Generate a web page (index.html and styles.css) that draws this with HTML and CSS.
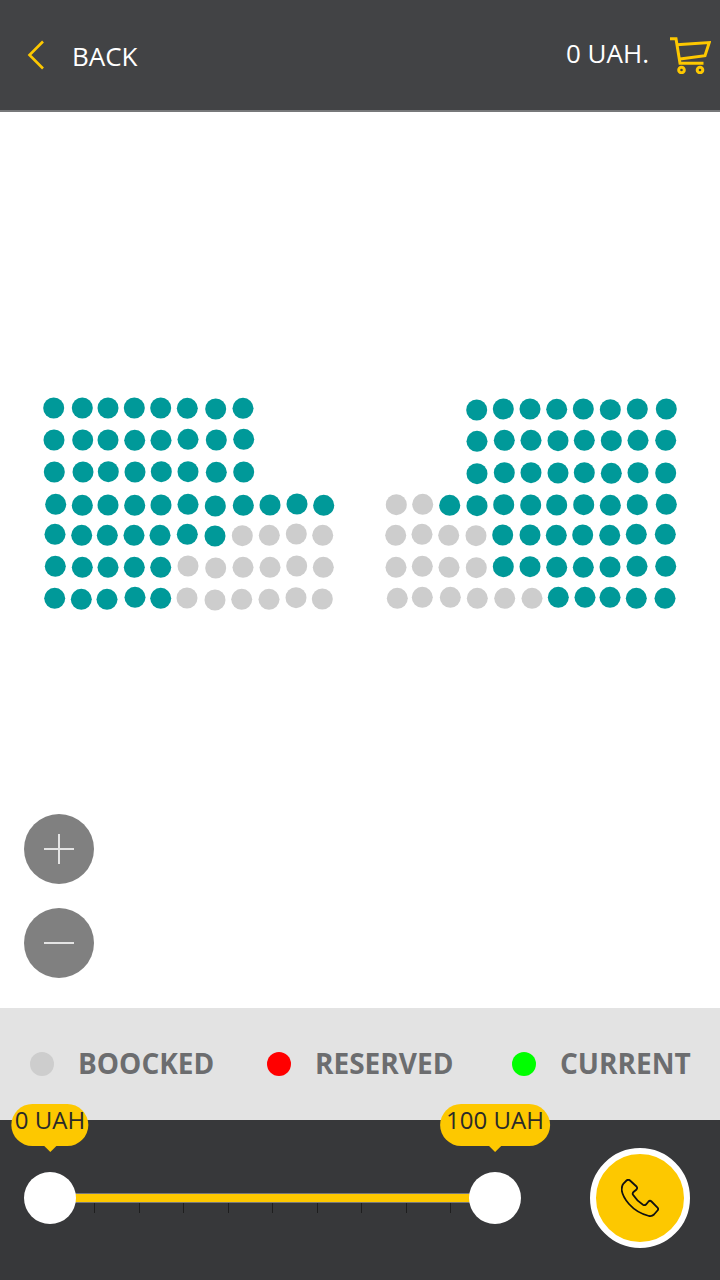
FILE: index.html
```html
<!DOCTYPE html>
<html lang="en">
<head>
    <meta charset="UTF-8">
    <meta name="viewport" content="width=device-width, initial-scale=1.0">
    <title>Hall map</title>
    <link rel="stylesheet" href="styles.css">
</head>
<body>
    <div class="screen">
        <header class="topbar">
            <a class="back-link" href="#">
                <svg class="back-icon" width="18" height="30" viewBox="0 0 18 30"><path d="M16 1.5 L2.5 15 L16 28.5"/></svg>
                <span>BACK</span>
            </a>
            <div class="cart">
                <span class="cart-sum">0 UAH.</span>
                <svg class="cart-icon" width="42" height="38" viewBox="669 37 42 38">
                    <path d="M670 39.7 H676 L680 64.3 H703.5"/>
                    <path d="M676.7 45.7 L709.3 43.5 L705 56.7 L680 60"/>
                    <circle cx="681.5" cy="71" r="2.8"/>
                    <circle cx="700" cy="71" r="2.8"/>
                </svg>
            </div>
        </header>

        <main class="hall">
            <svg class="seat-map" viewBox="0 112 720 702">
                <g class="free">
                    <circle cx="53.7" cy="408" r="10.5"/><circle cx="82.3" cy="408" r="10.5"/><circle cx="108" cy="408" r="10.5"/><circle cx="134.3" cy="408" r="10.5"/><circle cx="160.7" cy="408" r="10.5"/><circle cx="187.3" cy="408.3" r="10.5"/><circle cx="215.7" cy="409" r="10.5"/><circle cx="243" cy="408.3" r="10.5"/>
                    <circle cx="54" cy="440" r="10.5"/><circle cx="82.7" cy="440" r="10.5"/><circle cx="108" cy="440" r="10.5"/><circle cx="134.7" cy="440.3" r="10.5"/><circle cx="161" cy="440.3" r="10.5"/><circle cx="188" cy="439.3" r="10.5"/><circle cx="216.3" cy="440" r="10.5"/><circle cx="243.7" cy="439.3" r="10.5"/>
                    <circle cx="54.3" cy="472" r="10.5"/><circle cx="83" cy="472" r="10.5"/><circle cx="108.3" cy="471.7" r="10.5"/><circle cx="135" cy="472" r="10.5"/><circle cx="161.3" cy="471.7" r="10.5"/><circle cx="188" cy="471.7" r="10.5"/><circle cx="216.3" cy="472.3" r="10.5"/><circle cx="243.7" cy="472" r="10.5"/>
                    <circle cx="55.7" cy="504.3" r="10.5"/><circle cx="82.3" cy="505.3" r="10.5"/><circle cx="108" cy="505" r="10.5"/><circle cx="134.7" cy="505.3" r="10.5"/><circle cx="161" cy="505" r="10.5"/><circle cx="188" cy="504.3" r="10.5"/><circle cx="215.3" cy="506" r="10.5"/><circle cx="243.3" cy="505.3" r="10.5"/><circle cx="270" cy="505" r="10.5"/><circle cx="297" cy="504" r="10.5"/><circle cx="323.7" cy="505.3" r="10.5"/>
                    <circle cx="55" cy="534.3" r="10.5"/><circle cx="81.7" cy="535.3" r="10.5"/><circle cx="107.3" cy="535.3" r="10.5"/><circle cx="134" cy="535.3" r="10.5"/><circle cx="160" cy="535.3" r="10.5"/><circle cx="187.3" cy="534.3" r="10.5"/><circle cx="215" cy="536" r="10.5"/>
                    <circle cx="55.3" cy="566.3" r="10.5"/><circle cx="82.3" cy="567.3" r="10.5"/><circle cx="108" cy="567.3" r="10.5"/><circle cx="134.3" cy="567.3" r="10.5"/><circle cx="160.7" cy="567.3" r="10.5"/>
                    <circle cx="54.7" cy="598.3" r="10.5"/><circle cx="81.3" cy="599.3" r="10.5"/><circle cx="107" cy="599.3" r="10.5"/><circle cx="135" cy="597.3" r="10.5"/><circle cx="160.7" cy="598.3" r="10.5"/>

                    <circle cx="476.7" cy="410" r="10.5"/><circle cx="503.3" cy="409" r="10.5"/><circle cx="530" cy="409" r="10.5"/><circle cx="556.7" cy="409.3" r="10.5"/><circle cx="583.3" cy="409" r="10.5"/><circle cx="610.3" cy="409.7" r="10.5"/><circle cx="637.3" cy="409" r="10.5"/><circle cx="666.3" cy="409" r="10.5"/>
                    <circle cx="477" cy="441.3" r="10.5"/><circle cx="504.3" cy="440.3" r="10.5"/><circle cx="531" cy="440.3" r="10.5"/><circle cx="558" cy="440.7" r="10.5"/><circle cx="584.3" cy="440.3" r="10.5"/><circle cx="611.3" cy="440.7" r="10.5"/><circle cx="638" cy="440.3" r="10.5"/><circle cx="665.7" cy="440.3" r="10.5"/>
                    <circle cx="477" cy="473.7" r="10.5"/><circle cx="504.3" cy="472.7" r="10.5"/><circle cx="531" cy="472.7" r="10.5"/><circle cx="558" cy="473" r="10.5"/><circle cx="584.3" cy="472.7" r="10.5"/><circle cx="611.3" cy="473.3" r="10.5"/><circle cx="638" cy="472.7" r="10.5"/><circle cx="665.7" cy="473" r="10.5"/>
                    <circle cx="449.7" cy="505.3" r="10.5"/><circle cx="477" cy="505.7" r="10.5"/><circle cx="503.7" cy="504.7" r="10.5"/><circle cx="530.7" cy="505" r="10.5"/><circle cx="556.7" cy="505" r="10.5"/><circle cx="583.7" cy="504.7" r="10.5"/><circle cx="610.3" cy="505.3" r="10.5"/><circle cx="637.3" cy="504.7" r="10.5"/><circle cx="666.3" cy="504.3" r="10.5"/>
                    <circle cx="502.7" cy="535" r="10.5"/><circle cx="530" cy="535" r="10.5"/><circle cx="556.3" cy="535.3" r="10.5"/><circle cx="582.7" cy="535" r="10.5"/><circle cx="609.7" cy="535.3" r="10.5"/><circle cx="636.3" cy="534.3" r="10.5"/><circle cx="665.3" cy="534.3" r="10.5"/>
                    <circle cx="503.3" cy="566.7" r="10.5"/><circle cx="530" cy="566.7" r="10.5"/><circle cx="556.7" cy="567.3" r="10.5"/><circle cx="583.3" cy="567.3" r="10.5"/><circle cx="610" cy="567" r="10.5"/><circle cx="637" cy="566.3" r="10.5"/><circle cx="665.7" cy="566.3" r="10.5"/>
                    <circle cx="558.3" cy="597.3" r="10.5"/><circle cx="585" cy="597.3" r="10.5"/><circle cx="610" cy="597.3" r="10.5"/><circle cx="636.3" cy="598.3" r="10.5"/><circle cx="665" cy="598.3" r="10.5"/>
                </g>
                <g class="boocked">
                    <circle cx="242.3" cy="535.7" r="10.5"/><circle cx="269.3" cy="535.3" r="10.5"/><circle cx="296.3" cy="534" r="10.5"/><circle cx="322.7" cy="535.3" r="10.5"/>
                    <circle cx="188" cy="566" r="10.5"/><circle cx="215.7" cy="568" r="10.5"/><circle cx="243" cy="567.3" r="10.5"/><circle cx="270" cy="567.3" r="10.5"/><circle cx="296.7" cy="566" r="10.5"/><circle cx="323.3" cy="567.3" r="10.5"/>
                    <circle cx="187" cy="598" r="10.5"/><circle cx="215" cy="600" r="10.5"/><circle cx="241.7" cy="599.3" r="10.5"/><circle cx="269" cy="599.3" r="10.5"/><circle cx="296" cy="597.7" r="10.5"/><circle cx="322.3" cy="599" r="10.5"/>

                    <circle cx="396.3" cy="504.7" r="10.5"/><circle cx="422.7" cy="504.3" r="10.5"/>
                    <circle cx="395.7" cy="535.3" r="10.5"/><circle cx="422" cy="534.3" r="10.5"/><circle cx="448.7" cy="535.3" r="10.5"/><circle cx="476" cy="535.7" r="10.5"/>
                    <circle cx="396" cy="567.3" r="10.5"/><circle cx="422.3" cy="566.3" r="10.5"/><circle cx="449" cy="567.3" r="10.5"/><circle cx="476.3" cy="567.7" r="10.5"/>
                    <circle cx="397.3" cy="598.3" r="10.5"/><circle cx="422.3" cy="597.3" r="10.5"/><circle cx="450.3" cy="597.3" r="10.5"/><circle cx="477.3" cy="598.3" r="10.5"/><circle cx="504.7" cy="598.3" r="10.5"/><circle cx="532" cy="598.3" r="10.5"/>
                </g>
            </svg>

            <div class="zoom-controls">
                <button class="zoom-btn" type="button" aria-label="Zoom in">
                    <svg width="30" height="30" viewBox="0 0 30 30"><path d="M0 15 H30 M15 0 V30"/></svg>
                </button>
                <button class="zoom-btn" type="button" aria-label="Zoom out">
                    <svg width="30" height="30" viewBox="0 0 30 30"><path d="M0 15 H30"/></svg>
                </button>
            </div>
        </main>

        <section class="legend">
            <div class="legend-item"><span class="legend-dot dot-boocked"></span><span class="legend-label">BOOCKED</span></div>
            <div class="legend-item"><span class="legend-dot dot-reserved"></span><span class="legend-label">RESERVED</span></div>
            <div class="legend-item"><span class="legend-dot dot-current"></span><span class="legend-label">CURRENT</span></div>
        </section>

        <footer class="price-bar">
            <div class="slider">
                <div class="slider-track"></div>
                <div class="slider-ticks">
                    <i></i><i></i><i></i><i></i><i></i><i></i><i></i><i></i><i></i>
                </div>
                <div class="thumb thumb-min"><span class="bubble">0 UAH</span></div>
                <div class="thumb thumb-max"><span class="bubble">100 UAH</span></div>
            </div>
            <button class="call-btn" type="button" aria-label="Call">
                <svg width="38" height="38" viewBox="0 0 38 38"><path d="M5.5 1.5 Q7.3 0 9 1.5 L15.5 7.5 Q16.8 9 15.5 10.5 L12.5 13 Q11 14.5 12.2 16 Q16 22 22 25.8 Q23.5 26.7 25 25.5 L27.5 22.5 Q29 21 30.5 22.5 L36.5 28.5 Q37.8 30 36.5 31.5 L33 35.5 Q31 37.5 28 37 Q16 34 8 25 Q1.5 17.5 .7 11 Q.5 7 2.5 4.5 Z"/></svg>
            </button>
        </footer>
    </div>
</body>
</html>
```

FILE: styles.css
```css
body {
    margin: 0;
    font-family: 'Open Sans', sans-serif;
    background-color: #fff;
}
button {
    padding: 0;
    border: none;
    cursor: pointer;
}
.screen {
    display: flex;
    flex-direction: column;
    width: 720px;
    height: 1280px;
    overflow: hidden;
}

/* top bar */
.topbar {
    display: flex;
    justify-content: space-between;
    align-items: center;
    box-sizing: border-box;
    height: 112px;
    padding: 0 10px 0 27px;
    background-color: #424345;
    border-bottom: 2px solid #77787a;
}
.back-link {
    display: flex;
    align-items: center;
    gap: 27px;
    color: #fff;
    font-size: 26px;
    line-height: 36px;
    text-decoration: none;
}
.back-link span {
    padding-top: 2px;
}
.back-icon path {
    fill: none;
    stroke: #fdc800;
    stroke-width: 2.6;
}
.cart {
    display: flex;
    align-items: center;
    gap: 20px;
    color: #fff;
    font-size: 26px;
}
.cart-sum {
    margin-bottom: 4px;
}
.cart-icon {
    margin-right: -1px;
}
.cart-icon path,
.cart-icon circle {
    fill: none;
    stroke: #fdc800;
    stroke-width: 3;
}

/* seats */
.hall {
    display: flex;
    flex-direction: column;
    flex: 1;
    padding-bottom: 30px;
}
.seat-map {
    display: block;
    flex: 1;
    width: 720px;
    min-height: 0;
}
.free circle {
    fill: #009999;
}
.boocked circle {
    fill: #cdcdcd;
}
.zoom-controls {
    display: flex;
    flex-direction: column;
    gap: 24px;
    padding-left: 24px;
}
.zoom-btn {
    display: flex;
    justify-content: center;
    align-items: center;
    width: 70px;
    height: 70px;
    border-radius: 50%;
    background-color: #808080;
}
.zoom-btn path {
    fill: none;
    stroke: #e4e4e4;
    stroke-width: 2;
}

/* legend */
.legend {
    display: grid;
    grid-template-columns: 237px 245px auto;
    align-items: center;
    height: 112px;
    padding-left: 30px;
    background-color: #e3e3e3;
}
.legend-item {
    display: flex;
    align-items: center;
    gap: 24px;
    color: #6c6d6f;
    font-size: 28px;
    font-weight: 700;
    white-space: nowrap;
}
.legend-label {
    margin-bottom: 2px;
}
.legend-dot {
    width: 24px;
    height: 24px;
    border-radius: 50%;
}
.dot-boocked {
    background-color: #cdcdcd;
}
.dot-reserved {
    background-color: #ff0000;
}
.dot-current {
    background-color: #00ff00;
}

/* price slider */
.price-bar {
    display: flex;
    justify-content: space-between;
    align-items: center;
    box-sizing: border-box;
    height: 160px;
    padding: 0 30px 4px 24px;
    background-color: #37383a;
}
.slider {
    position: relative;
    width: 497px;
    height: 52px;
}
.slider-track {
    position: absolute;
    top: 21px;
    left: 26px;
    right: 26px;
    height: 8px;
    background-color: #fdc800;
    border: 1px solid #77787a;
    border-width: 1px 0;
}
.slider-ticks {
    position: absolute;
    top: 31px;
    left: 70px;
    display: flex;
    gap: 43.5px;
}
.slider-ticks i {
    width: 1px;
    height: 10px;
    background-color: #1e1e1e;
}
.thumb {
    position: absolute;
    top: 0;
    width: 52px;
    height: 52px;
    border-radius: 50%;
    background-color: #fff;
}
.thumb-min {
    left: 0;
}
.thumb-max {
    right: 0;
}
.bubble {
    position: absolute;
    top: -68px;
    left: 50%;
    height: 42px;
    padding: 0 3.5px;
    line-height: 32px;
    transform: translateX(-50%);
    border-radius: 21px;
    background-color: #fdc800;
    color: #2a2a2a;
    font-size: 24px;
    white-space: nowrap;
}
.thumb-max .bubble {
    padding: 0 6px;
}
.bubble::after {
    content: '';
    position: absolute;
    left: 50%;
    bottom: -4px;
    width: 10px;
    height: 10px;
    margin-left: -5px;
    transform: rotate(45deg);
    background-color: #fdc800;
}
.call-btn {
    display: flex;
    justify-content: center;
    align-items: center;
    box-sizing: border-box;
    width: 100px;
    height: 100px;
    border: 6px solid #fff;
    border-radius: 50%;
    background-color: #fdc800;
}
.call-btn path {
    fill: none;
    stroke: #111;
    stroke-width: 1.8;
}
```
